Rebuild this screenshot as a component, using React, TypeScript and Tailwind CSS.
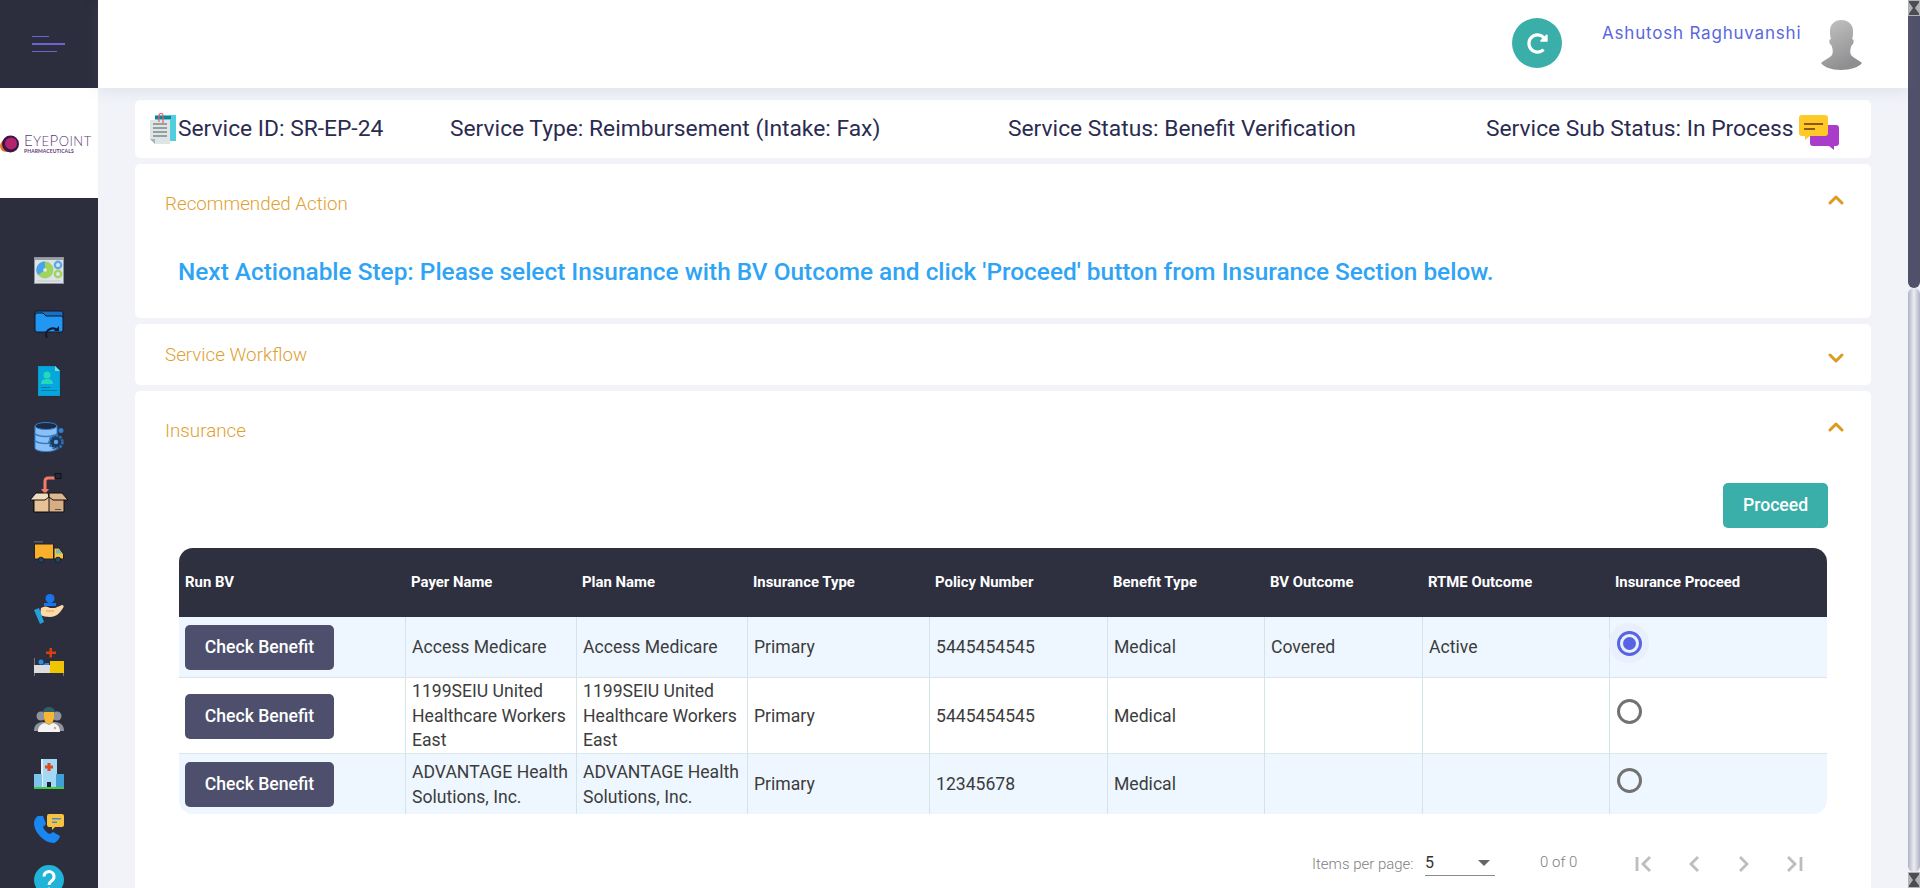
import { ChevronDown, ChevronUp } from 'lucide-react'
import { FaRedoAlt } from 'react-icons/fa'

const rows = [
  { payer: 'Access Medicare', type: 'Primary', policy: '5445454545', benefit: 'Medical', bv: 'Covered', rtme: 'Active', selected: true },
  { payer: '1199SEIU United Healthcare Workers East', type: 'Primary', policy: '5445454545', benefit: 'Medical', bv: '', rtme: '', selected: false },
  { payer: 'ADVANTAGE Health Solutions, Inc.', type: 'Primary', policy: '12345678', benefit: 'Medical', bv: '', rtme: '', selected: false },
]

const columns = ['Run BV', 'Payer Name', 'Plan Name', 'Insurance Type', 'Policy Number', 'Benefit Type', 'BV Outcome', 'RTME Outcome', 'Insurance Proceed']

function DashboardIcon() {
  return (
    <svg width="30" height="28" viewBox="0 0 30 28">
      <rect x="0.5" y="0.5" width="29" height="26" fill="#dfe3e8" stroke="#8f949c" />
      <rect x="1" y="1" width="28" height="2" fill="#9aa0a8" />
      <circle cx="11" cy="13" r="8.5" fill="#9ed45f" />
      <path d="M11 13V4.5A8.5 8.5 0 0 0 4 18z" fill="#4aa3ee" />
      <circle cx="11" cy="13" r="1.8" fill="#e8f0d8" />
      <circle cx="24" cy="8" r="3.2" fill="#dfe3e8" stroke="#5da9e9" strokeWidth="2.4" />
      <circle cx="24" cy="17" r="3.2" fill="#dfe3e8" stroke="#9ed45f" strokeWidth="2.4" />
      <rect x="3" y="23.5" width="24" height="1" fill="#c2c7cd" />
    </svg>
  )
}

function FolderIcon() {
  return (
    <svg width="30" height="30" viewBox="0 0 30 30">
      <path d="M3 1h24a2 2 0 0 1 2 2v4H1V3a2 2 0 0 1 2-2z" fill="#1d6fc4" stroke="#111827" strokeWidth="1" />
      <path d="M1 5a2 2 0 0 1 2-2h6l3 3h15a2 2 0 0 1 2 2v12a2 2 0 0 1-2 2H3a2 2 0 0 1-2-2z" fill="#2196f3" stroke="#111827" strokeWidth="1" />
      <path d="M13 28a6 6 0 0 1 3-9 6 6 0 0 1 7 1" fill="none" stroke="#111827" strokeWidth="2" />
      <path d="M20 21h5v-5z" fill="#111827" />
    </svg>
  )
}

function PatientDocIcon() {
  return (
    <svg width="22" height="30" viewBox="0 0 22 30">
      <path d="M0 0h17l5 5v25H0z" fill="#05a7dd" stroke="#0791c4" />
      <path d="M17 0l5 5h-5z" fill="#6fe3d0" />
      <circle cx="9" cy="9" r="3.5" fill="#25d8b8" />
      <path d="M3 18c0-4 3-5 6-5s6 1 6 5z" fill="#25d8b8" />
      <rect x="3" y="21" width="9" height="1" fill="#0779a8" />
      <rect x="3" y="24" width="16" height="1" fill="#0779a8" />
    </svg>
  )
}

function DatabaseIcon() {
  return (
    <svg width="30" height="30" viewBox="0 0 30 30">
      <path d="M1 4v22c0 2 5 3.500 11 3.500s11-1.500 11-3.500V4z" fill="#8cc0f5" stroke="#2f80d0" strokeWidth="1" />
      <ellipse cx="12" cy="4" rx="11" ry="3.500" fill="#1e2a44" stroke="#2f80d0" />
      <path d="M1 11c0 2 5 3.500 11 3.500S23 13 23 11M1 18c0 2 5 3.500 11 3.500S23 20 23 18" fill="none" stroke="#2f80d0" strokeWidth="1.500" />
      <circle cx="22" cy="20" r="6.500" fill="#1e3a5f" stroke="#2f6fb0" strokeWidth="2.500" strokeDasharray="2.500 1.200" />
      <circle cx="22" cy="20" r="2.200" fill="#5aa4e8" />
      <circle cx="27" cy="8.500" r="2.500" fill="#2f80d0" />
    </svg>
  )
}

function BoxIcon() {
  return (
    <svg width="38" height="40" viewBox="0 0 38 40">
      <path d="M15 20v-12a3 3 0 0 1 3-3h7" fill="none" stroke="#f47c64" strokeWidth="3" />
      <path d="M11 16h8l-4 5z" fill="#f47c64" />
      <rect x="25" y="0.500" width="6" height="5" fill="#23283a" stroke="#111" />
      <path d="M4 24h30v15H4z" fill="#d8ad83" stroke="#111" />
      <path d="M4 24h15v15H4z" fill="#e8c197" stroke="#111" />
      <path d="M6 20h12l1 4-4 3H0z" fill="#f2dcc0" stroke="#111" strokeLinejoin="round" />
      <path d="M32 20H19v4l4 3h15z" fill="#dcb78f" stroke="#111" strokeLinejoin="round" />
      <rect x="25" y="36" width="6" height="1" fill="#555" />
    </svg>
  )
}

function TruckIcon() {
  return (
    <svg width="30" height="23" viewBox="0 0 30 23">
      <rect x="0" y="0" width="9" height="1.500" fill="#55596a" />
      <rect x="0.500" y="3" width="19" height="15" fill="#fbb02d" stroke="#222" />
      <path d="M20 7h5l4.500 6v5H20z" fill="#f7c23f" stroke="#222" />
      <path d="M22 8.500h3l3 4h-6z" fill="#6dbcc8" />
      <circle cx="7" cy="19" r="2.800" fill="#16486e" stroke="#222" />
      <circle cx="24" cy="19" r="2.800" fill="#16486e" stroke="#222" />
    </svg>
  )
}

function HandIcon() {
  return (
    <svg width="30" height="30" viewBox="0 0 30 30">
      <circle cx="16" cy="4.500" r="4.500" fill="#1976e8" />
      <path d="M10 9h12v3H10z" fill="#1976e8" />
      <path d="M7 14c3-2 6-2 9 0h5l7-3c2 0 2 2 1 3-3 5-7 9-13 9-4 0-7-1-10-2z" fill="#fcd9a8" />
      <path d="M12 17h8" stroke="#e2a766" strokeWidth="1.200" />
      <path d="M0 16l5-2 5 14-4 2z" fill="#22a0dc" />
    </svg>
  )
}

function BedIcon() {
  return (
    <svg width="30" height="28" viewBox="0 0 30 28">
      <path d="M15.500 0h2.500v3.500H22V6h-4v3.500h-2.500V6H12V3.500h3.500z" fill="#d9400d" />
      <rect x="0" y="10" width="1" height="18" fill="#777" />
      <rect x="29" y="22" width="1" height="6" fill="#777" />
      <circle cx="7" cy="14" r="2.500" fill="#2a8be0" />
      <path d="M9 17c1-2 3-2 6-2v4H9z" fill="#2a8be0" />
      <rect x="0" y="17" width="16" height="8" fill="#dcdcdc" />
      <rect x="16" y="13" width="14" height="12" fill="#f0c400" />
    </svg>
  )
}

function DoctorsIcon() {
  return (
    <svg width="30" height="26" viewBox="0 0 30 26">
      <circle cx="7" cy="9" r="4.500" fill="#8f949c" />
      <circle cx="23" cy="9" r="4.500" fill="#8f949c" />
      <path d="M0 24c0-6 3-8 8-9h14c5 1 8 3 8 9z" fill="#8f949c" />
      <path d="M9 5a6 5 0 0 1 12 0z" fill="#2f5f6b" />
      <path d="M10 5h10v5c0 4-2 7-5 7s-5-3-5-7z" fill="#f7b733" />
      <path d="M4 25c0-6 3-8 7-9l4 2 4-2c4 1 7 3 7 9z" fill="#f4f4f4" />
      <circle cx="21" cy="21" r="1.200" fill="#f4978e" />
    </svg>
  )
}

function HospitalIcon() {
  return (
    <svg width="30" height="30" viewBox="0 0 30 30">
      <rect x="7" y="0" width="16" height="28" fill="#a5d8f3" />
      <rect x="7" y="0" width="2" height="28" fill="#dceef8" />
      <rect x="0" y="15" width="8" height="13" fill="#7cc5ec" />
      <rect x="22" y="15" width="8" height="13" fill="#3f9fd6" />
      <path d="M13.500 4h3v2.500H19v3h-2.500V12h-3V9.500H11v-3h2.500z" fill="#e0461f" />
      <rect x="13" y="23" width="4" height="5" fill="#123" />
      <rect x="0" y="28" width="30" height="2" fill="#44c83c" />
    </svg>
  )
}

function PhoneIcon() {
  return (
    <svg width="30" height="30" viewBox="0 0 30 30">
      <path d="M4 2l5 0 3 8-3 3c1 3 4 6 7 7l3-2 7 4c0 2-3 6-6 7C10 29 0 18 0 9c0-3 2-6 4-7z" fill="#1a86f0" />
      <path d="M15 0h13a2 2 0 0 1 2 2v9a2 2 0 0 1-2 2h-7l-3 3v-3h-3a2 2 0 0 1-2-2V2a2 2 0 0 1 2-2z" fill="#f7c23f" />
      <rect x="18" y="4" width="9" height="1.500" fill="#3f8fd6" />
      <rect x="18" y="7.500" width="5" height="1.500" fill="#3f8fd6" />
    </svg>
  )
}

function HelpIcon() {
  return (
    <svg width="30" height="30" viewBox="0 0 30 30">
      <circle cx="15" cy="15" r="15" fill="#22b4d8" />
      <path d="M10 11.500a5 5 0 1 1 8 4c-2 1.500-3 2-3 4.500" fill="none" stroke="#fff" strokeWidth="3" />
      <circle cx="15" cy="24.500" r="2" fill="#fff" />
    </svg>
  )
}

function ServiceDocIcon() {
  return (
    <svg width="26" height="32" viewBox="0 0 26 32">
      <rect x="5" y="2" width="21" height="26" fill="#4fd0dc" />
      <rect x="5" y="3" width="16" height="3" fill="#1b7f99" />
      <path d="M0 7h20v24H5l-5-5z" fill="#dfe4e4" />
      <path d="M0 26h5v5z" fill="#aab2b2" />
      <path d="M3 11h14M3 15h14M3 19h14M3 23h14" stroke="#7d8a8a" strokeWidth="1.300" />
      <path d="M9 9V2.500a2 2 0 0 1 4 0V10" fill="none" stroke="#ef5a5f" strokeWidth="1.200" />
    </svg>
  )
}

function ChatIcon() {
  return (
    <svg width="40" height="36" viewBox="0 0 40 36">
      <path d="M14 10h23a3 3 0 0 1 3 3v15a3 3 0 0 1-3 3h-2v4l-5-4H14a3 3 0 0 1-3-3V13a3 3 0 0 1 3-3z" fill="#a93cc9" />
      <path d="M3 0h23a3 3 0 0 1 3 3v15a3 3 0 0 1-3 3H11l-5 4v-4H3a3 3 0 0 1-3-3V3a3 3 0 0 1 3-3z" fill="#ffca28" />
      <path d="M5 8h19v2H5zM5 13h11v2H5z" fill="#8a5a14" />
    </svg>
  )
}

function Avatar() {
  return (
    <svg width="41" height="50" viewBox="0 0 41 50">
      <defs>
        <linearGradient id="avatarFill" x1="0" y1="0" x2="0.400" y2="1">
          <stop offset="0" stopColor="#c4c4c4" />
          <stop offset="1" stopColor="#8f8f91" />
        </linearGradient>
      </defs>
      <path d="M20 0c7 0 12 4 12 11 0 3 0 6-1 8 2 0 2 3 1 5-1 1-2 2-2 3-1 3-1 6 0 8 2 3 8 5 11 8-3 4-11 7-21 7S3 47 0 43c3-3 9-5 11-8 1-2 1-5 0-8 0-1-1-2-2-3-1-2-1-5 1-5-1-3-1-6-1-8 0-7 5-11 11-11z" fill="url(#avatarFill)" />
    </svg>
  )
}

function Hourglass() {
  return (
    <div className="h-4 w-3 bg-[#b4b4b4] flex items-center justify-center">
      <svg width="10" height="14" viewBox="0 0 10 14">
        <path d="M0 0h10v1.500L6 7l4 5.500V14H0v-1.500L4 7 0 1.500z" fill="#4c4c54" />
      </svg>
    </div>
  )
}

function Radio({ checked }: { checked: boolean }) {
  if (checked) {
    return (
      <div className="w-[40px] h-[40px] rounded-full bg-[#e9effc] flex items-center justify-center">
        <div className="w-[25px] h-[25px] rounded-full border-[3px] border-[#5664e3] flex items-center justify-center">
          <div className="w-[13px] h-[13px] rounded-full bg-[#5664e3]" />
        </div>
      </div>
    )
  }
  return (
    <div className="w-[40px] h-[40px] flex items-center justify-center">
      <div className="w-[25px] h-[25px] rounded-full border-[3px] border-[#727272]" />
    </div>
  )
}

function PagerIcon({ kind }: { kind: 'first' | 'prev' | 'next' | 'last' }) {
  return (
    <svg width="24" height="24" viewBox="0 0 24 24" fill="none" stroke="#bdbdbd" strokeWidth="2.800">
      {kind === 'first' && <path d="M5 5v14M18 5l-7 7 7 7" />}
      {kind === 'prev' && <path d="M16 5l-7 7 7 7" />}
      {kind === 'next' && <path d="M8 5l7 7-7 7" />}
      {kind === 'last' && <path d="M19 5v14M6 5l7 7-7 7" />}
    </svg>
  )
}

export default function App() {
  return (
    <div className="h-[888px] w-[1920px] overflow-hidden flex bg-[#f1f3f9] font-['Roboto',sans-serif]">
      {/* Sidebar */}
      <aside className="w-[98px] flex-shrink-0 h-full bg-[#2c2e3e] flex flex-col overflow-hidden">
        <div className="h-[88px] flex-shrink-0 flex flex-col justify-center gap-[6px] pl-[32px] pb-[1px] w-[97px]">
          <div className="h-[1px] w-[17px] bg-[#6e62cf]" />
          <div className="h-[2px] w-[33px] bg-[#6e62cf]" />
          <div className="h-[1px] w-[25px] bg-[#6e62cf]" />
        </div>
        <div className="h-[110px] flex-shrink-0 bg-white flex items-center">
          <svg width="19" height="19" viewBox="0 0 19 19" className="mt-[2px] flex-shrink-0">
            <circle cx="6" cy="11" r="6" fill="#e8742a" />
            <circle cx="10.500" cy="9" r="8.500" fill="#3a1545" />
            <circle cx="11" cy="8.500" r="6" fill="#b4236d" />
          </svg>
          <div className="pl-[5px] text-[#5b3a78] font-['Lato',sans-serif] font-light leading-none">
            <div className="text-[15px] tracking-[0.5px] h-[14px]">
              E<span className="text-[13px]">YE</span>P<span className="text-[13px]">OINT</span>
            </div>
            <div className="text-[5px] font-bold tracking-[0.1px] mt-[2px]">PHARMACEUTICALS</div>
          </div>
        </div>
        <div className="flex flex-col items-center flex-shrink-0 pr-[1px]">
          <div className="h-[56px] mt-[45px] flex items-center"><DashboardIcon /></div>
          <div className="h-[56px] flex items-center -mt-[2px]"><FolderIcon /></div>
          <div className="h-[56px] flex items-center"><PatientDocIcon /></div>
          <div className="h-[56px] flex items-center"><DatabaseIcon /></div>
          <div className="h-[56px] flex items-center"><BoxIcon /></div>
          <div className="h-[56px] flex items-center mt-[3px]"><TruckIcon /></div>
          <div className="h-[56px] flex items-center mt-[1px]"><HandIcon /></div>
          <div className="h-[56px] flex items-center -mt-[3px]"><BedIcon /></div>
          <div className="h-[56px] flex items-center mt-[2px]"><DoctorsIcon /></div>
          <div className="h-[56px] flex items-center -mt-[2px]"><HospitalIcon /></div>
          <div className="h-[56px] flex items-center -mt-[1px]"><PhoneIcon /></div>
          <div className="h-[56px] flex items-center -mt-[5px]"><HelpIcon /></div>
        </div>
      </aside>

      {/* Main */}
      <div className="flex-1 min-w-0 flex flex-col">
        <header className="h-[88px] flex-shrink-0 bg-white flex shadow-[0_2px_14px_rgba(120,125,150,0.16)] relative">
          <div className="ml-[1414px] mt-[18px] w-[50px] h-[50px] rounded-full bg-[#3aafa9] flex items-center justify-center">
            <FaRedoAlt size={21} color="#ffffff" />
          </div>
          <div className="ml-[40px] mt-[21px] h-[24px] leading-[24px] text-[17px] tracking-[0.8px] w-[201px] whitespace-nowrap text-[#5a67e0] font-['Inter',sans-serif]">
            Ashutosh Raghuvanshi
          </div>
          <div className="ml-[18px] mt-[20px]"><Avatar /></div>
        </header>

        <main className="flex-1 px-[37px] pt-[12px]">
          {/* Service bar */}
          <div className="h-[58px] rounded-[5px] bg-white flex items-center pl-[15px] text-[22.8px] text-[#2b2b52] whitespace-nowrap">
            <ServiceDocIcon />
            <span className="ml-[2px] w-[207px]">Service ID: SR-EP-24</span>
            <span className="ml-[65px] w-[429px]">Service Type: Reimbursement (Intake: Fax)</span>
            <span className="ml-[129px] w-[349px]">Service Status: Benefit Verification</span>
            <span className="ml-[129px] w-[306px]">Service Sub Status: In Process</span>
            <span className="ml-[7px] mt-[8px]"><ChatIcon /></span>
          </div>

          {/* Recommended action */}
          <section className="mt-[6px] h-[154px] rounded-[5px] bg-white px-[30px] pt-[27px]">
            <div className="flex items-center justify-between h-[26px]">
              <span className="text-[18.8px] font-light text-[#e0a030]">Recommended Action</span>
              <ChevronUp size={24} color="#dc9a1e" strokeWidth={3} className="-mt-[8px] -mr-[7px]" />
            </div>
            <div className="mt-[37px] ml-[13px] text-[24.4px] font-medium text-[#2fa4f5] whitespace-nowrap">
              Next Actionable Step: Please select Insurance with BV Outcome and click 'Proceed' button from Insurance Section below.
            </div>
          </section>

          {/* Service workflow */}
          <section className="mt-[6px] h-[61px] rounded-[5px] bg-white px-[30px] flex items-center justify-between">
            <span className="text-[18.8px] font-light text-[#e0a030] mt-[2px]">Service Workflow</span>
            <ChevronDown size={24} color="#dc9a1e" strokeWidth={3} className="mt-[6px] -mr-[7px]" />
          </section>

          {/* Insurance */}
          <section className="mt-[6px] h-[600px] rounded-[5px] bg-white pt-[27px]">
            <div className="flex items-center justify-between h-[26px] px-[30px]">
              <span className="text-[18.8px] font-light text-[#e0a030]">Insurance</span>
              <ChevronUp size={24} color="#dc9a1e" strokeWidth={3} className="-mt-[8px] -mr-[7px]" />
            </div>
            <div className="flex justify-end mt-[39px] pr-[43px]">
              <button className="w-[105px] h-[45px] rounded-[5px] bg-[#3aafa9] text-white text-[17.6px] font-medium">Proceed</button>
            </div>
            <table className="ml-[44px] mt-[20px] w-[1648px] table-fixed border-separate border-spacing-0">
              <colgroup>
                <col className="w-[226px]" />
                <col className="w-[171px]" />
                <col className="w-[171px]" />
                <col className="w-[182px]" />
                <col className="w-[178px]" />
                <col className="w-[157px]" />
                <col className="w-[158px]" />
                <col className="w-[187px]" />
                <col className="w-[218px]" />
              </colgroup>
              <thead>
                <tr className="h-[69px] bg-[#2e2f3f] text-white text-[14.9px] font-bold text-left">
                  {columns.map((c, i) => (
                    <th
                      key={c}
                      className={`pl-[6px] font-bold ${i === 0 ? 'rounded-tl-[14px]' : ''} ${i === columns.length - 1 ? 'rounded-tr-[14px]' : ''}`}
                    >
                      {c}
                    </th>
                  ))}
                </tr>
              </thead>
              <tbody className="text-[17.6px] leading-[24.6px] text-[#3c3c3c]">
                {rows.map((r, i) => {
                  const last = i === rows.length - 1
                  const bg = i % 2 === 0 ? 'bg-[#eef7ff]' : 'bg-white'
                  const cell = `pl-[6px] pr-0 pt-[1px] border-l border-[#d3e3e8] ${last ? '' : 'border-b border-b-[#dbe5ea]'} ${bg}`
                  return (
                    <tr key={i} className={i === 0 ? 'h-[61px]' : i === 1 ? 'h-[76px]' : 'h-[60px]'}>
                      <td className={`pl-[6px] pt-[1px] ${last ? 'rounded-bl-[14px]' : 'border-b border-b-[#dbe5ea]'} ${bg}`}>
                        <button className="w-[149px] h-[45px] rounded-[5px] bg-[#4d4f6c] text-white text-[17.6px] font-medium">
                          Check Benefit
                        </button>
                      </td>
                      <td className={cell}>{r.payer}</td>
                      <td className={cell}>{r.payer}</td>
                      <td className={cell}>{r.type}</td>
                      <td className={cell}>{r.policy}</td>
                      <td className={cell}>{r.benefit}</td>
                      <td className={cell}>{r.bv}</td>
                      <td className={cell}>{r.rtme}</td>
                      <td className={`border-l border-[#d3e3e8] ${last ? 'rounded-br-[14px]' : 'border-b border-b-[#dbe5ea]'} ${bg}`}>
                        <div className="-mt-[8px] -ml-[1px]"><Radio checked={r.selected} /></div>
                      </td>
                    </tr>
                  )
                })}
              </tbody>
            </table>

            {/* Pagination */}
            <div className="flex items-start mt-[36px] ml-[1177px] text-[15px] font-light text-[#808080]">
              <span className="mt-[3px] w-[103px] whitespace-nowrap">Items per page:</span>
              <div className="ml-[10px] w-[70px] h-[26px] border-b border-[#8a8a8a] flex items-center justify-between text-[16px] font-normal text-[#333] pr-[3px]">
                <span>5</span>
                <span className="w-0 h-0 border-x-[6px] border-x-transparent border-t-[6px] border-t-[#666] mr-[2px]" />
              </div>
              <span className="ml-[45px] mt-[1px] whitespace-nowrap">0 of 0</span>
              <div className="ml-[55px] flex gap-[26px] mt-[2px]">
                <PagerIcon kind="first" />
                <PagerIcon kind="prev" />
                <PagerIcon kind="next" />
                <PagerIcon kind="last" />
              </div>
            </div>
          </section>
        </main>
      </div>

      {/* Page scrollbar as it appears in the capture */}
      <div className="w-3 flex-shrink-0 h-full flex flex-col bg-[#f1f3f9]">
        <Hourglass />
        <div className="h-[272px] bg-[#50506a] rounded-b-[6px]" />
        <div className="flex-1 rounded-b-[6px] rounded-t-[6px] bg-gradient-to-r from-[#b0b2c4] via-[#ecedf3] to-[#b0b2c4]" />
        <Hourglass />
      </div>
    </div>
  )
}
